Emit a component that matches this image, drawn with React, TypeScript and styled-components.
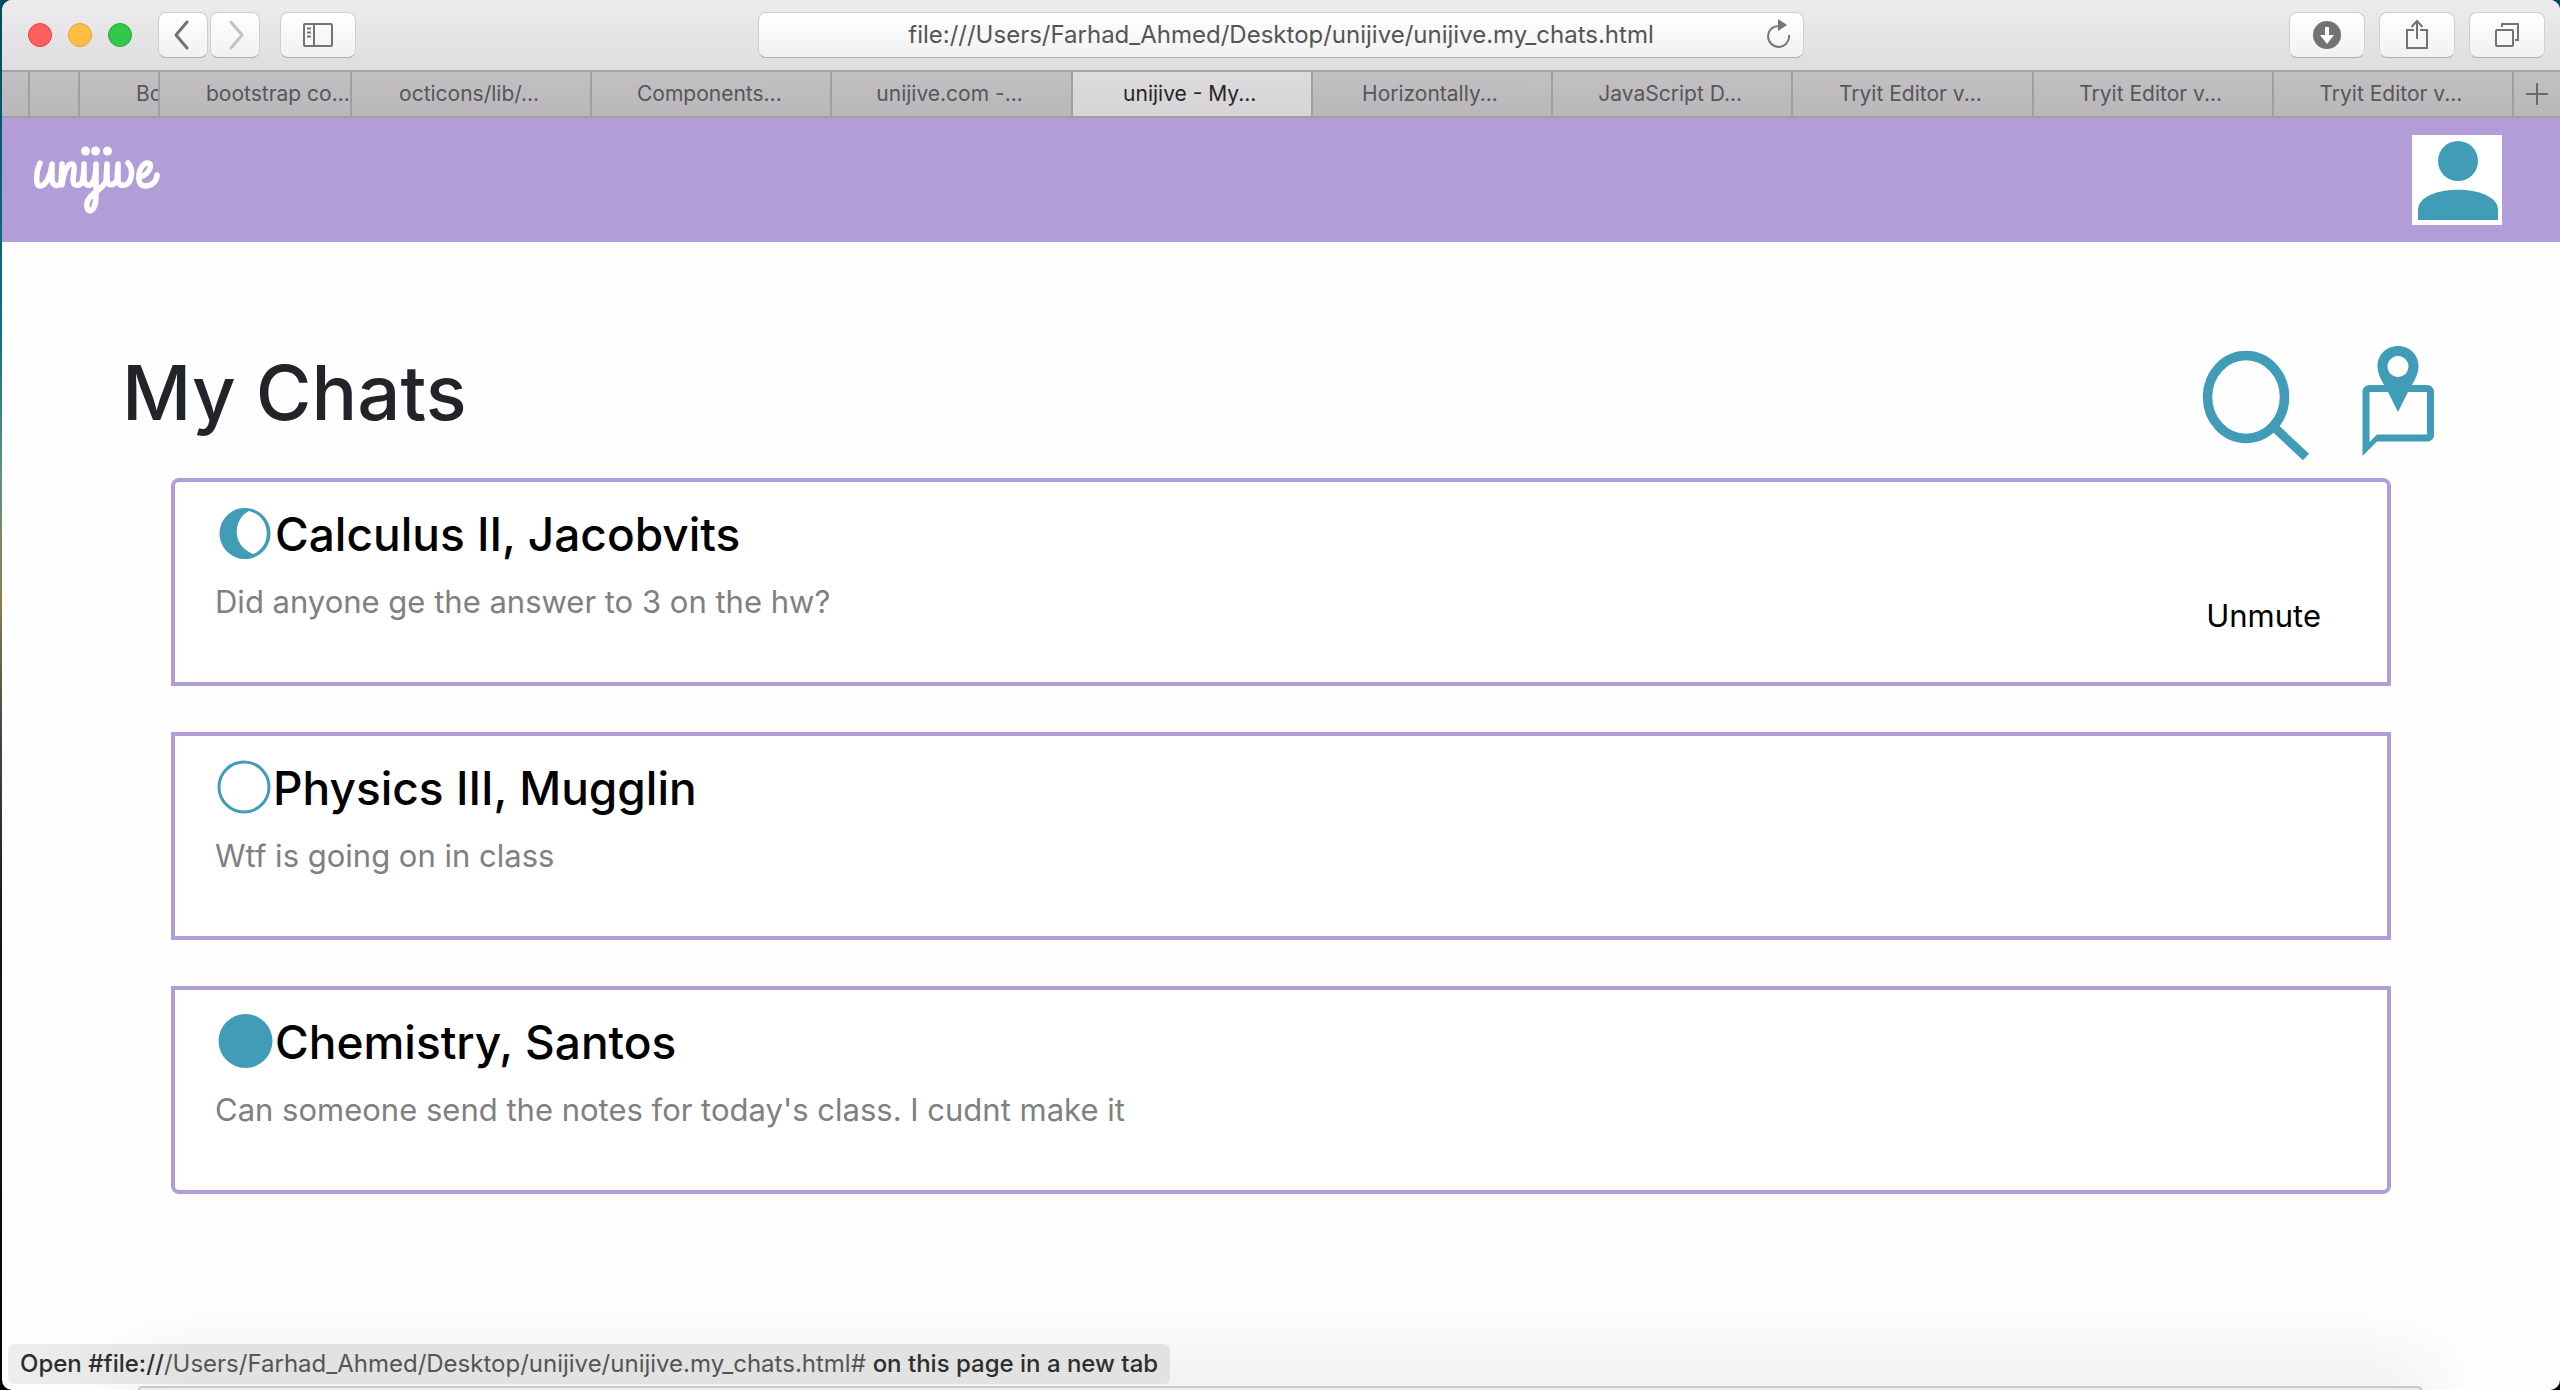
import React from "react";
import styled, { createGlobalStyle } from "styled-components";

const teal = "#419db7";
const purple = "#b29dd9";

const GlobalStyle = createGlobalStyle`
  *, *::before, *::after { box-sizing: border-box; }
  html { background: #0d1417; }
  body { margin: 0; font-family: Inter, "Liberation Sans", sans-serif; }
  button, input { font: inherit; margin: 0; }
`;

const Desktop = styled.div`
  min-height: 100vh;
  padding-left: 2px;
  display: flex;
  background: linear-gradient(#004a5e 0, #0e7284 24%, #5f9280 34%, #8c7f50 43%, #4b4a44 52%, #10191b 66%, #050505 100%);
`;

const Window = styled.div`
  position: relative;
  flex: 1;
  min-width: 0;
  display: flex;
  flex-direction: column;
  background: #fefefe;
  border-radius: 10px;
  overflow: hidden;
`;

const Toolbar = styled.div`
  height: 70px;
  display: grid;
  grid-template-columns: 1fr minmax(0, 1046px) 1fr;
  align-items: center;
  background: linear-gradient(#ecebee, #dfdde0);
`;

const ToolGroup = styled.div<{ $end?: boolean }>`
  display: flex;
  align-items: center;
  gap: ${(p) => (p.$end ? 14 : 20)}px;
  padding: 0 15px 0 26px;
  justify-content: ${(p) => (p.$end ? "flex-end" : "flex-start")};
`;

const Lights = styled.div`
  display: flex;
  gap: 16px;
  margin-right: 6px;
`;

const Light = styled.button<{ $fill: string; $edge: string }>`
  width: 24px;
  height: 24px;
  padding: 0;
  border-radius: 50%;
  border: 1px solid ${(p) => p.$edge};
  background: ${(p) => p.$fill};
`;

const NavPair = styled.div`
  display: flex;
  gap: 2px;
`;

const ToolButton = styled.button<{ $narrow?: boolean }>`
  width: ${(p) => (p.$narrow ? 50 : 76)}px;
  height: 46px;
  padding: 0;
  display: grid;
  place-items: center;
  border: 1px solid #d0ced1;
  border-bottom-color: #aeacaf;
  border-radius: 8px;
  background: linear-gradient(#ffffff, #f1f1f1);
  color: #737373;
`;

const Address = styled.div`
  height: 46px;
  display: flex;
  align-items: center;
  padding: 0 10px 0 38px;
  border: 1px solid #d0ced1;
  border-bottom-color: #aeacaf;
  border-radius: 8px;
  background: linear-gradient(#ffffff, #f1f1f1);
`;

const AddressInput = styled.input`
  flex: 1;
  min-width: 0;
  border: 0;
  outline: 0;
  background: none;
  text-align: center;
  font-size: 24px;
  line-height: 32px;
  color: #555555;
`;

const Reload = styled.button`
  width: 28px;
  height: 36px;
  padding: 0;
  border: 0;
  background: none;
  color: #757575;
`;

const TabStrip = styled.nav`
  height: 48px;
  display: flex;
  border-top: 2px solid #a5a3a6;
  border-bottom: 2px solid #a09ea1;
  background: linear-gradient(#c2c0c3, #b9b7ba);
`;

const Tab = styled.a<{ $w?: number; $active?: boolean; $pad?: number }>`
  ${(p) => (p.$w ? `flex: 0 0 ${p.$w}px;` : "flex: 1 1 0;")}
  min-width: 0;
  padding-left: ${(p) => p.$pad ?? 0}px;
  padding-right: ${(p) => (p.$pad ? 0 : 4)}px;
  overflow: hidden;
  white-space: nowrap;
  text-align: ${(p) => (p.$pad ? "left" : "center")};
  text-decoration: none;
  font-size: 21px;
  line-height: 44px;
  border-right: 2px solid #a09ea1;
  color: ${(p) => (p.$active ? "#252525" : "#57565a")};
  background: ${(p) => (p.$active ? "linear-gradient(#dddbde, #d6d4d7)" : "none")};
`;

const NewTab = styled.button`
  width: 46px;
  padding: 0;
  border: 0;
  background: none;
  color: #6a696b;
  display: grid;
  place-items: center;
`;

const Header = styled.header`
  height: 124px;
  padding: 17px 58px 17px 28px;
  display: flex;
  justify-content: space-between;
  background: ${purple};
`;

const Brand = styled.a`
  width: 130px;
  height: 90px;
  color: #ffffff;
`;

const Avatar = styled.button`
  width: 90px;
  height: 90px;
  padding: 0;
  border: 0;
  background: #ffffff;
  color: ${teal};
`;

const Page = styled.main`
  flex: 1;
  padding: 96px 122px 0 120px;
`;

const TitleRow = styled.div`
  height: 140px;
  display: flex;
  justify-content: space-between;
`;

const Title = styled.h1`
  margin: 6px 0 0;
  font-size: 76px;
  line-height: 96px;
  font-weight: 500;
  color: #212529;
`;

const Actions = styled.div`
  display: flex;
  gap: 52px;
  padding-right: 4px;
`;

const Action = styled.button<{ $w: number }>`
  width: ${(p) => p.$w}px;
  height: 126px;
  padding: 0;
  border: 0;
  background: none;
  color: ${teal};
`;

const ChatList = styled.ul`
  margin: 0;
  padding: 0 47px 0 49px;
  list-style: none;
  display: grid;
  gap: 46px;
`;

const ChatCard = styled.li`
  height: 208px;
  padding: 22px 66px 22px 40px;
  display: flex;
  justify-content: space-between;
  border: 4px solid ${purple};
  background: #ffffff;
  &:first-child { border-radius: 8px 8px 0 0; }
  &:last-child { border-radius: 0 0 8px 8px; }
`;

const ChatLink = styled.a`
  color: #000000;
  text-decoration: none;
`;

const ChatName = styled.h2`
  margin: 0 0 14px;
  display: flex;
  align-items: center;
  font-size: 46px;
  line-height: 60px;
  font-weight: 500;
`;

const Message = styled.p`
  margin: 0;
  font-size: 31px;
  line-height: 48px;
  color: #808080;
`;

const Mute = styled.button`
  align-self: center;
  margin-top: 68px;
  padding: 0;
  border: 0;
  background: none;
  font-size: 31px;
  line-height: 40px;
  color: #000000;
`;

const DockShade = styled.div`
  position: absolute;
  left: 136px;
  right: 138px;
  bottom: 0;
  height: 4px;
  border: 2px solid #cbcbcb;
  border-bottom: 0;
  border-radius: 6px 6px 0 0;
  background: #ededed;
  box-shadow: 0 0 80px 12px rgba(0, 0, 0, 0.16);
`;

const Status = styled.div`
  position: absolute;
  left: 6px;
  bottom: 6px;
  height: 40px;
  padding: 0 12px;
  border-radius: 6px;
  background: linear-gradient(90deg, #eeeeee, #e2e2e2 16%, #e2e2e2);
  font-size: 24px;
  line-height: 40px;
  white-space: nowrap;
  color: #555555;
  b { font-weight: 500; color: #2e2e2e; }
`;

const Svg = styled.svg`
  display: block;
  flex: none;
`;

type Phase = "crescent" | "open" | "full";

function Moon({ phase }: { phase: Phase }) {
  const width = phase === "open" ? 58 : 60;
  return (
    <Svg width={width} height="60" viewBox={`0 0 ${width} 60`} fill="none" aria-hidden="true">
      {phase === "full" && <circle cx="30.500" cy="29" r="27" fill={teal} />}
      {phase === "open" && <circle cx="29" cy="29" r="25" stroke={teal} strokeWidth="3" />}
      {phase === "crescent" && (
        <path
          fill={teal}
          fillRule="evenodd"
          d="M30 4a25.500 25.500 0 1 0 .01 0zM34 7C19 14 15 41 38 50C56 44 58 13 34 7z"
        />
      )}
    </Svg>
  );
}

const chats: { name: string; message: string; phase: Phase; muted?: boolean }[] = [
  { name: "Calculus II, Jacobvits", message: "Did anyone ge the answer to 3 on the hw?", phase: "crescent", muted: true },
  { name: "Physics III, Mugglin", message: "Wtf is going on in class", phase: "open" },
  { name: "Chemistry, Santos", message: "Can someone send the notes for today's class. I cudnt make it", phase: "full" },
];

const tabs: { label: string; w?: number; active?: boolean; pad?: number }[] = [
  { label: "", w: 28 },
  { label: "", w: 50 },
  { label: "Bo", w: 80, pad: 56 },
  { label: "bootstrap co...", w: 192, pad: 46 },
  { label: "octicons/lib/..." },
  { label: "Components..." },
  { label: "unijive.com -..." },
  { label: "unijive - My...", active: true },
  { label: "Horizontally..." },
  { label: "JavaScript D..." },
  { label: "Tryit Editor v..." },
  { label: "Tryit Editor v..." },
  { label: "Tryit Editor v..." },
];

export default function App() {
  return (
    <>
      <GlobalStyle />
      <Desktop>
        <Window>
          <Toolbar>
            <ToolGroup>
              <Lights>
                <Light $fill="#fd605c" $edge="#e0443e" aria-label="Close" />
                <Light $fill="#fdbe41" $edge="#dea034" aria-label="Minimise" />
                <Light $fill="#34c84a" $edge="#27a935" aria-label="Zoom" />
              </Lights>
              <NavPair>
                <ToolButton $narrow aria-label="Back">
                  <Svg width="24" height="32" viewBox="0 0 24 32" fill="none" stroke="currentColor" strokeWidth="3" strokeLinecap="round" strokeLinejoin="round">
                    <path d="M16 3L5 16l11 13" />
                  </Svg>
                </ToolButton>
                <ToolButton $narrow aria-label="Forward">
                  <Svg width="24" height="32" viewBox="0 0 24 32" fill="none" stroke="#c2c2c2" strokeWidth="3" strokeLinecap="round" strokeLinejoin="round">
                    <path d="M8 3l11 13L8 29" />
                  </Svg>
                </ToolButton>
              </NavPair>
              <ToolButton aria-label="Show sidebar">
                <Svg width="32" height="26" viewBox="0 0 32 26" fill="none" stroke="currentColor" strokeWidth="2">
                  <rect x="2" y="2" width="28" height="22" rx="1" />
                  <path d="M12 2v22M5 6.500h4M5 10.500h4M5 14.500h4" />
                </Svg>
              </ToolButton>
            </ToolGroup>
            <Address>
              <AddressInput aria-label="Address" defaultValue="file:///Users/Farhad_Ahmed/Desktop/unijive/unijive.my_chats.html" />
              <Reload aria-label="Reload">
                <Svg width="28" height="36" viewBox="0 0 28 36" fill="none" stroke="currentColor" strokeWidth="2">
                  <path d="M15 9A10.500 10.500 0 1 0 24 18" />
                  <path d="M13 2l9 6-9 6z" fill="currentColor" stroke="none" />
                </Svg>
              </Reload>
            </Address>
            <ToolGroup $end>
              <ToolButton aria-label="Downloads">
                <Svg width="28" height="28" viewBox="0 0 28 28">
                  <circle cx="14" cy="14" r="14" fill="currentColor" />
                  <path d="M12 6h4v8h5l-7 9-7-9h5z" fill="#fff" />
                </Svg>
              </ToolButton>
              <ToolButton aria-label="Share">
                <Svg width="24" height="32" viewBox="0 0 24 32" fill="none" stroke="currentColor" strokeWidth="2">
                  <path d="M9 11H2v18h20V11h-7M12 20V2M6.500 8L12 2l5.500 6" />
                </Svg>
              </ToolButton>
              <ToolButton aria-label="Show all tabs">
                <Svg width="26" height="26" viewBox="0 0 26 26" fill="none" stroke="currentColor" strokeWidth="2">
                  <rect x="2" y="8" width="17" height="16" rx="1" />
                  <path d="M8 5V2h16v16h-3" />
                </Svg>
              </ToolButton>
            </ToolGroup>
          </Toolbar>

          <TabStrip aria-label="Tabs">
            {tabs.map((t, i) => (
              <Tab key={i} href="#" $w={t.w} $active={t.active} $pad={t.pad}>
                {t.label}
              </Tab>
            ))}
            <NewTab aria-label="New tab">
              <Svg width="22" height="22" viewBox="0 0 22 22" stroke="currentColor" strokeWidth="2">
                <path d="M11 0v22M0 11h22" />
              </Svg>
            </NewTab>
          </TabStrip>

          <Header>
            <Brand href="#" aria-label="unijive">
              <Svg width="130" height="90" viewBox="0 0 130 90" fill="none" stroke="currentColor" strokeWidth="5.500" strokeLinecap="round" strokeLinejoin="round">
                <path d="M10 28C6 37 5 51 10 51C16 51 21 40 22 29V44C22 50 26 52 31 49L32 29V50C33 40 37 28 42 29C46 30 43 40 43 45C43 51 49 52 52 47C54 41 54 36 54 29V44C54 51 60 52 63 47C66 41 66 36 66 29V60C66 80 55 79 57 68C59 58 72 56 76 46L77 29V44C77 52 84 51 87 45L88 29V44C88 50 91 51 95 50C102 48 104 34 98 28" />
                <path d="M109 42C118 41 124 29 118 28C109 27 104 51 115 51C122 51 127 46 127 40" />
                <g fill="currentColor" stroke="none">
                  <circle cx="55.500" cy="16" r="4.500" />
                  <circle cx="65.500" cy="16" r="4.500" />
                  <circle cx="77.500" cy="16" r="4.500" />
                </g>
              </Svg>
            </Brand>
            <Avatar aria-label="Profile">
              <Svg width="90" height="90" viewBox="0 0 90 90" fill="currentColor">
                <circle cx="46" cy="26" r="20" />
                <path d="M6 85V75C6 48 86 48 86 75v10z" />
              </Svg>
            </Avatar>
          </Header>

          <Page>
            <TitleRow>
              <Title>My Chats</Title>
              <Actions>
                <Action $w={108} aria-label="Search chats">
                  <Svg width="108" height="126" viewBox="0 0 108 126" fill="none" stroke="currentColor">
                    <ellipse cx="44" cy="59" rx="38.500" ry="41.500" strokeWidth="9.500" />
                    <path d="M73 90l31 29" strokeWidth="9" />
                  </Svg>
                </Action>
                <Action $w={72} aria-label="Chats nearby">
                  <Svg width="72" height="126" viewBox="0 0 72 126" fill="currentColor">
                    <path fillRule="evenodd" d="M36 8C24 8 15.500 17 15.500 28C15.500 36 19 41 22 47H8C3.500 47 .500 50 .500 54V118L15 103.500H65C69 103.500 72 101 72 97V54C72 50 69 47 65 47H50C53 41 56.500 36 56.500 28C56.500 17 48 8 36 8zM36 18a10.500 10.500 0 1 1-.01 0zM26 54L36 74 46 54H65V96.500H15L7.500 104V54z" />
                  </Svg>
                </Action>
              </Actions>
            </TitleRow>

            <ChatList>
              {chats.map((c) => (
                <ChatCard key={c.name}>
                  <ChatLink href="#">
                    <ChatName>
                      <Moon phase={c.phase} />
                      {c.name}
                    </ChatName>
                    <Message>{c.message}</Message>
                  </ChatLink>
                  {c.muted && <Mute>Unmute</Mute>}
                </ChatCard>
              ))}
            </ChatList>
          </Page>

          <DockShade />
          <Status>
            <b>Open #file://</b>/Users/Farhad_Ahmed/Desktop/unijive/unijive.my_chats.html# <b>on this page in a new tab</b>
          </Status>
        </Window>
      </Desktop>
    </>
  );
}
